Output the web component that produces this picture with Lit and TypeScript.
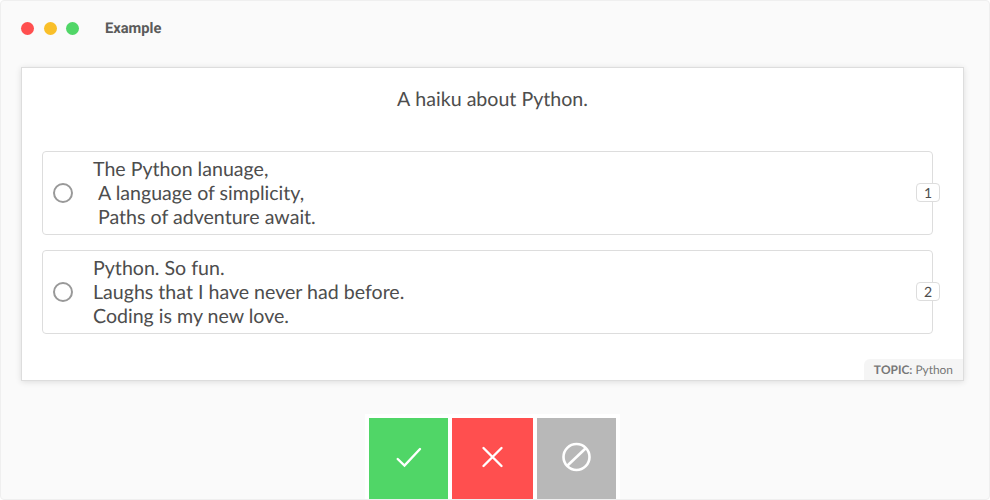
import { LitElement, html, css } from "lit";
import { customElement } from "lit/decorators.js";

const options = [
  { text: "The Python lanuage,\n A language of simplicity,\n Paths of adventure await.", key: "1" },
  { text: "Python. So fun.\nLaughs that I have never had before.\nCoding is my new love.", key: "2" },
];

@customElement("app-root")
export class AppRoot extends LitElement {
  static styles = css`
    :host { display: block; width: 990px; height: 500px; font-family: Lato, sans-serif; color: #4d4d4d; text-rendering: geometricPrecision; }
    * { box-sizing: border-box; }
    .window { width: 990px; height: 500px; background: #fafafa; border: 1px solid #efefef; border-radius: 4px; display: flex; flex-direction: column; overflow: hidden; }
    .titlebar { display: flex; align-items: center; height: 66px; padding: 0 0 12px 20px; flex: none; }
    .dot { width: 13px; height: 13px; border-radius: 50%; margin-right: 9.5px; }
    .dot.r { background: #ff4f4f; }
    .dot.y { background: #f9bf29; }
    .dot.g { background: #50d667; margin-right: 26px; }
    .title { font-family: Roboto, sans-serif; font-weight: 700; font-size: 14.7px; color: #5b5b5b; }
    .card { position: relative; flex: none; width: 943px; height: 314px; margin-left: 20px; background: #fff; border: 1px solid #ddd; box-shadow: 0 1px 6px rgba(0,0,0,.12); padding: 20px 30px 0 20px; }
    .prompt { font-size: 19.6px; line-height: 24px; text-align: center; height: 63px; margin-right: -10px; font-kerning: none; }
    .options { display: flex; flex-direction: column; gap: 15px; }
    .option { position: relative; display: flex; align-items: center; height: 84px; border: 1px solid #ddd; border-radius: 4px; padding-left: 10px; }
    .radio { width: 20px; height: 20px; border: 2px solid #999; border-radius: 50%; flex: none; margin-right: 20px; }
    .text { font-size: 19.6px; line-height: 24px; white-space: pre-wrap; padding-top: 2px; }
    .key { position: absolute; right: -8px; top: 31px; width: 24px; height: 19px; background: #fff; border: 1px solid #ddd; border-radius: 4px; font-size: 14px; line-height: 17px; text-align: center; }
    .topic { position: absolute; right: 0; bottom: 0; height: 21px; padding: 0 10px; background: #f5f5f5; border-top-left-radius: 6px; font-size: 11.9px; line-height: 21px; color: #777; font-kerning: none; }
    .topic b { font-weight: 700; }
    .actions { align-self: flex-start; display: flex; gap: 4px; padding: 4px 4px 0; margin: 33px 0 0 364px; background: #fff; height: 85px; }
    .btn { height: 81px; display: flex; align-items: center; justify-content: center; border: 0; padding: 0; }
    .btn svg { display: block; margin-bottom: 3px; }
    .ok { width: 79px; background: #50d667; }
    .no { width: 81px; background: #ff4f4f; }
    .skip { width: 79px; background: #b8b8b8; }
  `;

  render() {
    return html`
      <div class="window">
        <div class="titlebar">
          <span class="dot r"></span><span class="dot y"></span><span class="dot g"></span>
          <span class="title">Example</span>
        </div>
        <div class="card">
          <div class="prompt">A haiku about Python.</div>
          <div class="options">
            ${options.map((o) => html`
              <div class="option">
                <span class="radio"></span>
                <span class="text">${o.text}</span>
                <span class="key">${o.key}</span>
              </div>`)}
          </div>
          <div class="topic"><b>TOPIC:</b> Python</div>
        </div>
        <div class="actions">
          <div class="btn ok"><svg width="28" height="28" viewBox="0 0 28 28" fill="none" stroke="#fff" stroke-width="2.4" stroke-linecap="round" stroke-linejoin="miter"><path d="M2.7 16 L9.5 22.5 L25 6"/></svg></div>
          <div class="btn no"><svg width="28" height="28" viewBox="0 0 28 28" fill="none" stroke="#fff" stroke-width="2.4" stroke-linecap="round"><path d="M4.5 5 L22.5 23 M22.5 5 L4.5 23"/></svg></div>
          <div class="btn skip"><svg width="30" height="30" viewBox="0 0 30 30" fill="none" stroke="#fff" stroke-width="2.6"><circle cx="14.5" cy="15" r="13"/><path d="M5 24 L24 6"/></svg></div>
        </div>
      </div>
    `;
  }
}
